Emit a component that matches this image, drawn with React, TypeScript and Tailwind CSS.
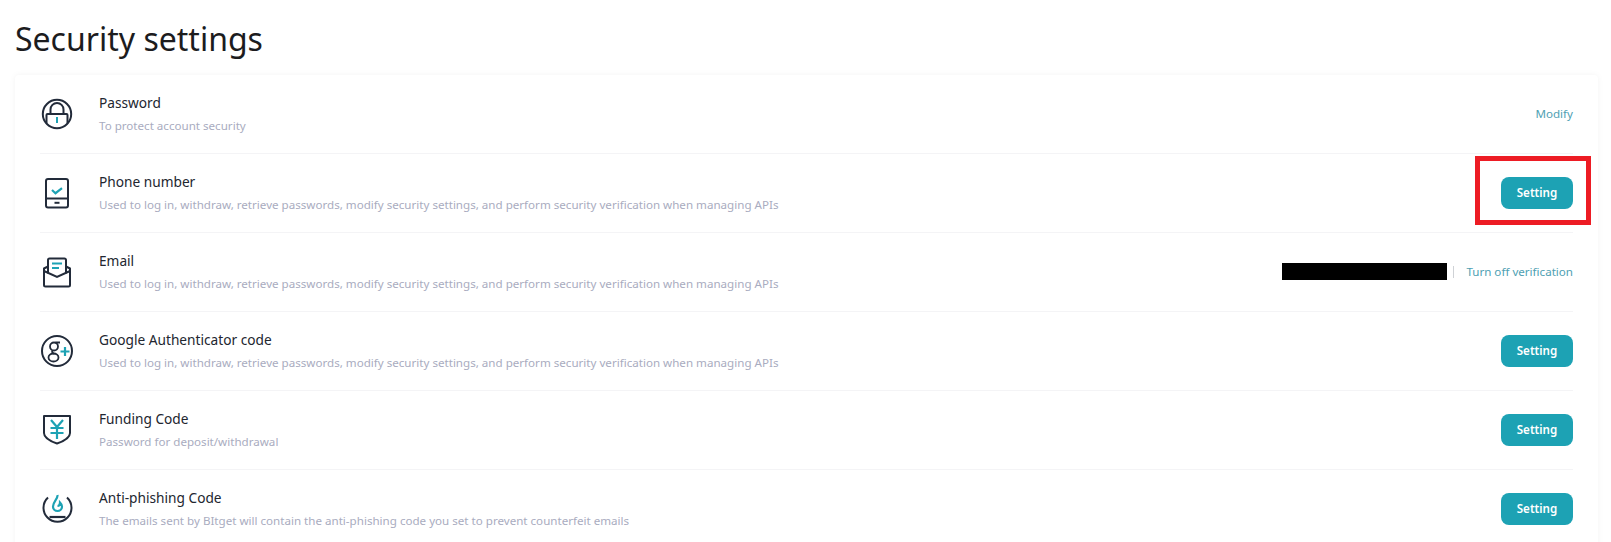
import type { ReactNode } from 'react';

const ink = '#222B3A';
const teal = '#1DA2B4';

const LockIcon = () => (
  <svg width="32" height="32" viewBox="0 0 32 32" fill="none">
    <circle cx="16" cy="16" r="14.2" stroke={ink} strokeWidth="2" />
    <path d="M9.500 16V11.500a6.500 6.500 0 0 1 13 0V16" stroke={ink} strokeWidth="2" />
    <path d="M5.500 25.500V17a1 1 0 0 1 1-1h19a1 1 0 0 1 1 1v8.500" stroke={ink} strokeWidth="2" />
    <path d="M16 19v6" stroke={teal} strokeWidth="2" />
  </svg>
);

const PhoneIcon = () => (
  <svg width="32" height="32" viewBox="0 0 32 32" fill="none">
    <rect x="5" y="2" width="22" height="28.500" rx="2" stroke={ink} strokeWidth="2" />
    <path d="M5 21.500h22" stroke={ink} strokeWidth="2" />
    <path d="M13.500 25.800h5" stroke={ink} strokeWidth="2" />
    <path d="M11 13l3.500 3.200 6.500-5" stroke={teal} strokeWidth="2.200" />
  </svg>
);

const MailIcon = () => (
  <svg width="32" height="32" viewBox="0 0 32 32" fill="none">
    <path d="M7 10.500L3 12.500V29a1.500 1.500 0 0 0 1.500 1.500h23A1.500 1.500 0 0 0 29 29V12.500l-4-2" stroke={ink} strokeWidth="2" strokeLinejoin="round" />
    <path d="M7 17.500V4a1.500 1.500 0 0 1 1.500-1.500h15A1.500 1.500 0 0 1 25 4v13.500" stroke={ink} strokeWidth="2" />
    <path d="M3 15l13 6 13-6" stroke={ink} strokeWidth="2" />
    <path d="M11 7.500h10M11 12h7" stroke={teal} strokeWidth="2.200" />
  </svg>
);

const GoogleIcon = () => (
  <svg width="32" height="32" viewBox="0 0 32 32" fill="none">
    <circle cx="16" cy="16" r="15" stroke={ink} strokeWidth="2" />
    <circle cx="13" cy="11.500" r="4" stroke={ink} strokeWidth="1.800" />
    <ellipse cx="12.500" cy="22.500" rx="5" ry="4" stroke={ink} strokeWidth="1.800" />
    <path d="M14.500 7.500h4.500M11.500 15.500c-1 1.500 0 2.500 2 3.500" stroke={ink} strokeWidth="1.800" />
    <path d="M24 12v9M19.500 16.500h9" stroke={teal} strokeWidth="2.200" />
  </svg>
);

const ShieldIcon = () => (
  <svg width="32" height="32" viewBox="0 0 32 32" fill="none">
    <path d="M3 2h26v17c0 4.500-7 8.500-13 10.500C10 27.500 3 23.500 3 19V2z" stroke={ink} strokeWidth="2" strokeLinejoin="round" />
    <path d="M10 6l6 7 6-7M9.500 14h13M9.500 19h13M16 13.500V25" stroke={teal} strokeWidth="2.200" />
  </svg>
);

const FlameIcon = () => (
  <svg width="32" height="32" viewBox="0 0 32 32" fill="none">
    <path d="M7 4.500a14 14 0 1 0 19 0" stroke={ink} strokeWidth="2" />
    <path d="M8.500 24h16" stroke={ink} strokeWidth="2.200" />
    <path d="M16.500 2c.5 4-4.500 6.500-4.500 11.500a4.500 4.500 0 0 0 9 0c0-1.800-1-3-2-4 0 2-1 3.500-2.500 3.500" stroke={teal} strokeWidth="2.200" />
  </svg>
);

const SettingButton = () => (
  <button className="w-[72px] h-8 rounded-lg bg-[#1DA2B4] text-white text-[11.6px] font-semibold">Setting</button>
);

const Link = ({ children }: { children: ReactNode }) => (
  <a className="text-[11.6px] text-[#4F9FB3]">{children}</a>
);

const usedFor =
  'Used to log in, withdraw, retrieve passwords, modify security settings, and perform security verification when managing APIs';

type RowProps = {
  icon: ReactNode;
  title: string;
  desc: string;
  action: ReactNode;
  last?: boolean;
};

const Row = ({ icon, title, desc, action, last }: RowProps) => (
  <div className={`flex items-center h-[78px] box-content ${last ? '' : 'border-b border-[#F4F4F6]'}`}>
    <div className="w-[59px] pl-px shrink-0">{icon}</div>
    <div className="flex-1">
      <div className="text-[13.7px] leading-5 text-[#22262F]">{title}</div>
      <div className="mt-[3px] text-[11.6px] leading-5 text-[#A9ACC0]">{desc}</div>
    </div>
    {action}
  </div>
);

export default function App() {
  return (
    <div className="h-[542px] overflow-hidden bg-white pl-[15px] pr-[13px] font-['Noto_Sans',sans-serif]">
      <h1 className="pt-[16px] h-[75px] text-[32px] leading-[46px] text-[#1C1C1E]">Security settings</h1>
      <div className="rounded-t px-[25px] shadow-[0_0_6px_rgba(0,0,0,0.05)]">
        <Row icon={<LockIcon />} title="Password" desc="To protect account security" action={<Link>Modify</Link>} />
        <Row
          icon={<PhoneIcon />}
          title="Phone number"
          desc={usedFor}
          action={
            <div className="relative">
              <SettingButton />
              <div className="absolute left-[-26px] top-[-21px] w-[116px] h-[69px] border-[5px] border-[#ED1C24]" />
            </div>
          }
        />
        <Row
          icon={<MailIcon />}
          title="Email"
          desc={usedFor}
          action={
            <div className="flex items-center">
              <div className="w-[165px] h-[17px] bg-black" />
              <div className="ml-[6px] mr-[12px] w-px h-3 bg-[#CFD2D6]" />
              <Link>Turn off verification</Link>
            </div>
          }
        />
        <Row icon={<GoogleIcon />} title="Google Authenticator code" desc={usedFor} action={<SettingButton />} />
        <Row icon={<ShieldIcon />} title="Funding Code" desc="Password for deposit/withdrawal" action={<SettingButton />} />
        <Row
          icon={<FlameIcon />}
          title="Anti-phishing Code"
          desc="The emails sent by BItget will contain the anti-phishing code you set to prevent counterfeit emails"
          action={<SettingButton />}
          last
        />
      </div>
    </div>
  );
}
